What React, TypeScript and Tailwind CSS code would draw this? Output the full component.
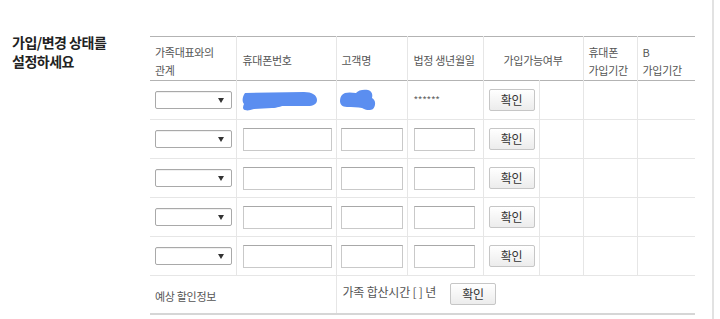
import React from 'react';

const font = { fontFamily: '"Noto Sans CJK KR", "Noto Sans", sans-serif' };

function FakeSelect() {
  return (
    <div className="flex h-[18px] w-[77px] items-center justify-end rounded-[2px] border border-[#a9a9a9] bg-white pr-[7px] shadow-[inset_0_1px_0_#f0f0f0]">
      <svg width="6" height="5" viewBox="0 0 6 5">
        <path d="M0 0 H6 L3 5 Z" fill="#333" />
      </svg>
    </div>
  );
}

function TextBox({ w }: { w: string }) {
  return <div className={`h-[23px] ${w} border border-[#c9c9c9] border-t-[#a8a8a8] bg-white`} />;
}

function CheckButton() {
  return (
    <button className="h-[22px] w-[46px] rounded-[2px] border border-[#c6c6c6] bg-gradient-to-b from-white to-[#ececec] text-[12px] leading-none text-[#333]">
      확인
    </button>
  );
}

function PhoneBlob() {
  return (
    <svg width="76" height="21" viewBox="0 0 76 21">
      <path
        d="M3 2 L62 1 C70 1 75 4 75 9 C75 13 71 15 66 15 L42 15 C38 15 36 17 30 17 L12 18 C8 19 6 20 3 19 C0 18 1 15 2 13 C0 11 0 6 3 2 Z"
        fill="#5b8ef0"
      />
    </svg>
  );
}

function NameBlob() {
  return (
    <svg width="37" height="22" viewBox="0 0 37 22">
      <path
        d="M2 6 C4 3 10 3 16 4 C18 1 24 0 28 1 C32 2 33 6 32 9 C36 11 36 17 33 20 C30 22 25 21 22 19 C18 18 12 18 7 18 C2 18 0 15 0 12 C0 9 1 7 2 6 Z"
        fill="#5b8ef0"
      />
    </svg>
  );
}

const cell = 'border-r border-b border-[#e6e6e6] align-middle';

export default function App() {
  const emptyRows = [0, 1, 2, 3];

  return (
    <div className="h-[319px] w-[720px] bg-white" style={font}>
      <div className="flex h-full w-[714px] border-r-2 border-[#e2e2e2]">
        <div className="w-[150px] shrink-0 pl-3 pt-[33px]">
          <p className="text-[14px] font-semibold leading-[19px] tracking-[-0.5px] text-[#222]">
            가입/변경 상태를
            <br />
            설정하세요
          </p>
        </div>

        <div className="pt-[36px]">
          <table className="w-[545px] table-fixed border-collapse text-[11px] tracking-[-0.3px] text-[#555]">
            <colgroup>
              <col className="w-[86px]" />
              <col className="w-[100px]" />
              <col className="w-[71px]" />
              <col className="w-[76px]" />
              <col className="w-[56px]" />
              <col className="w-[44px]" />
              <col className="w-[54px]" />
              <col className="w-[58px]" />
            </colgroup>
            <thead>
              <tr className="h-[44px] border-t border-b border-[#b3b3b3]">
                <th className="border-r border-[#e6e6e6] pl-[5px] pt-[4px] text-left font-normal leading-[18px]">
                  가족대표와의
                  <br />
                  관계
                </th>
                <th className="border-r border-[#e6e6e6] pl-[6px] pt-[4px] text-left font-normal">휴대폰번호</th>
                <th className="border-r border-[#e6e6e6] pl-[5px] pt-[4px] text-left font-normal">고객명</th>
                <th className="border-r border-[#e6e6e6] pl-[6px] pt-[4px] text-left font-normal">법정 생년월일</th>
                <th colSpan={2} className="border-r border-[#e6e6e6] pt-[4px] text-center font-normal">
                  가입가능여부
                </th>
                <th className="border-r border-[#e6e6e6] pl-[5px] pt-[4px] text-left font-normal leading-[18px]">
                  휴대폰
                  <br />
                  가입기간
                </th>
                <th className="pl-[5px] pt-[4px] text-left font-normal leading-[18px]">
                  B
                  <br />
                  가입기간
                </th>
              </tr>
            </thead>
            <tbody>
              <tr className="h-[39px]">
                <td className={`${cell} pl-[5px]`}>
                  <FakeSelect />
                </td>
                <td className={`${cell} pl-[5px] pt-[2px]`}>
                  <PhoneBlob />
                </td>
                <td className={`${cell} pl-[3px]`}>
                  <NameBlob />
                </td>
                <td className={`${cell} pl-[6px] pb-[2px] text-[10px] text-[#666]`}>******</td>
                <td className={`${cell} pl-[5px]`}>
                  <CheckButton />
                </td>
                <td className={cell} />
                <td className={cell} />
                <td className="border-b border-[#e6e6e6]" />
              </tr>
              {emptyRows.map((r) => (
                <tr key={r} className="h-[39px]">
                  <td className={`${cell} pl-[5px]`}>
                    <FakeSelect />
                  </td>
                  <td className={`${cell} pl-[6px]`}>
                    <TextBox w="w-[89px]" />
                  </td>
                  <td className={`${cell} pl-[4px]`}>
                    <TextBox w="w-[62px]" />
                  </td>
                  <td className={`${cell} pl-[6px]`}>
                    <TextBox w="w-[61px]" />
                  </td>
                  <td className={`${cell} pl-[5px]`}>
                    <CheckButton />
                  </td>
                  <td className={cell} />
                  <td className={cell} />
                  <td className="border-b border-[#e6e6e6]" />
                </tr>
              ))}
              <tr className="h-[38px] border-b-2 border-[#d6d6d6]">
                <td colSpan={2} className="border-r border-[#e6e6e6] pl-[5px] pt-[3px] align-middle">
                  예상 할인정보
                </td>
                <td colSpan={6} className="pl-[6px] align-middle">
                  <div className="flex items-center gap-[14px]">
                    <span className="-mt-[5px] text-[12px] tracking-[-0.2px]">가족 합산시간 [ ] 년</span>
                    <CheckButton />
                  </div>
                </td>
              </tr>
            </tbody>
          </table>
        </div>
      </div>
    </div>
  );
}
